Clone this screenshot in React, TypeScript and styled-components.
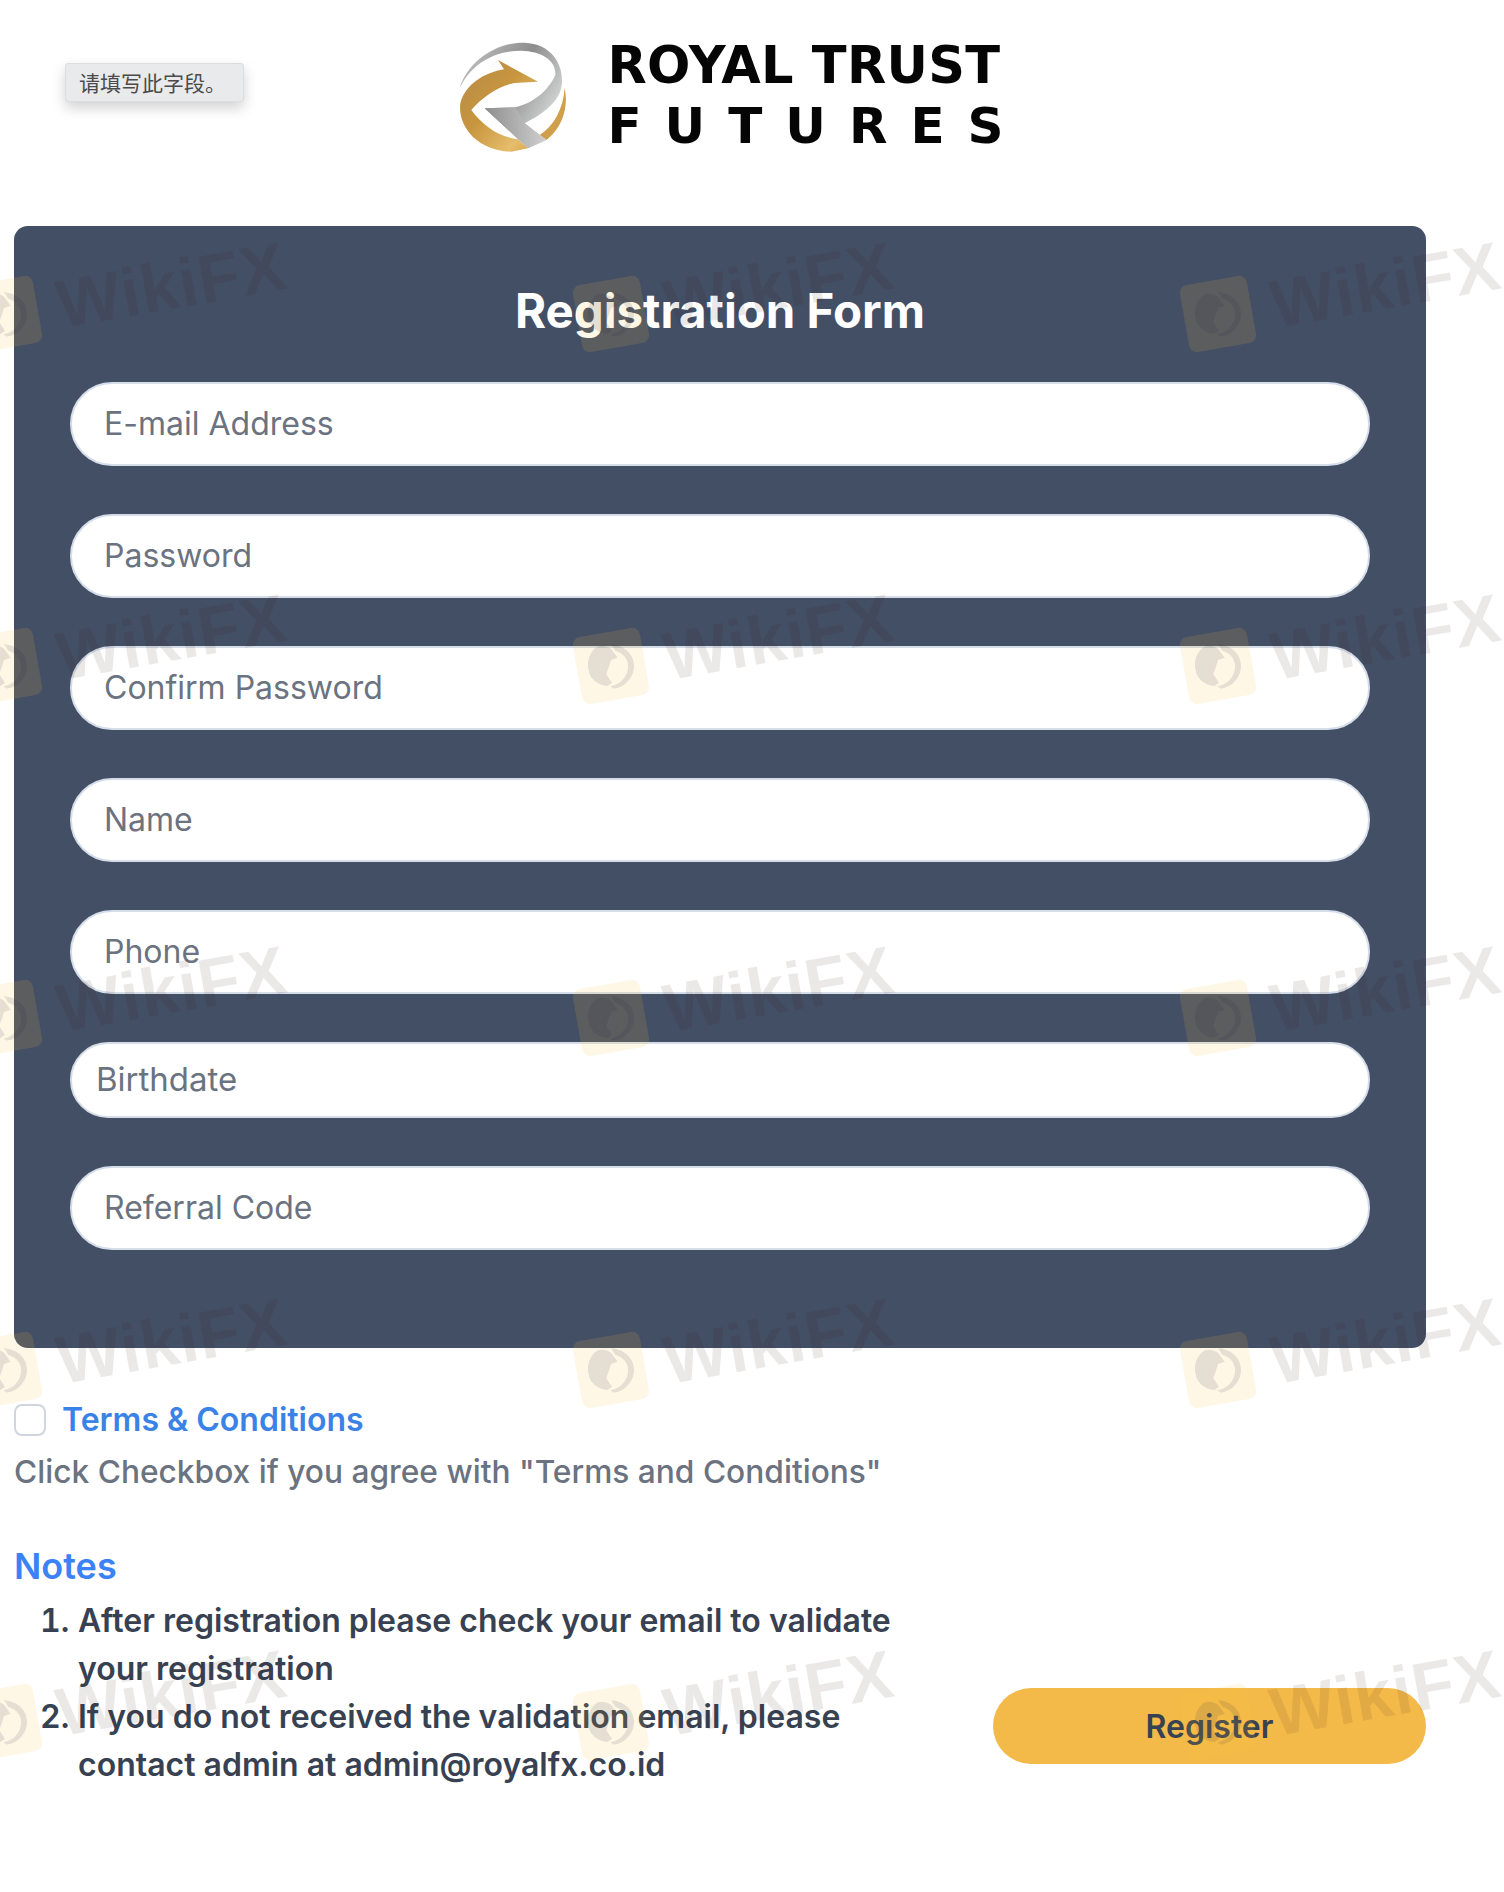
import * as React from 'react'
import styled, { createGlobalStyle } from 'styled-components'

const GlobalStyle = createGlobalStyle`
    html, body {
        margin: 0;
        padding: 0;
        background: #fff;
    }
    * {
        box-sizing: border-box;
    }
`

const FIELDS = [
    { placeholder: 'E-mail Address', type: 'email' },
    { placeholder: 'Password', type: 'password' },
    { placeholder: 'Confirm Password', type: 'password' },
    { placeholder: 'Name', type: 'text' },
    { placeholder: 'Phone', type: 'text' },
    { placeholder: 'Birthdate', type: 'text', compact: true },
    { placeholder: 'Referral Code', type: 'text' },
]

const WATERMARKS = Array.from({ length: 18 }, (_, i) => i)

const LogoMark = () => (
    <svg width="200" height="150" viewBox="0 0 600 450">
        <defs>
            <linearGradient id="goldBody" x1="0" y1="0" x2="1" y2="1">
                <stop offset="0" stopColor="#b5894a" />
                <stop offset="0.45" stopColor="#c8963f" />
                <stop offset="0.8" stopColor="#e6bd6c" />
                <stop offset="1" stopColor="#d19f45" />
            </linearGradient>
            <linearGradient id="greyBody" x1="0" y1="0" x2="1" y2="0.6">
                <stop offset="0" stopColor="#c9c9c9" />
                <stop offset="0.55" stopColor="#8d8d8d" />
                <stop offset="1" stopColor="#d9dada" />
            </linearGradient>
            <linearGradient id="greyLeg" x1="0" y1="0" x2="1" y2="0">
                <stop offset="0" stopColor="#8e8e8e" />
                <stop offset="1" stopColor="#cfcfcf" />
            </linearGradient>
        </defs>
        <path
            fill="url(#goldBody)"
            d="M330 185 L210 120 L228 148 C170 158 112 192 97 250 C88 320 150 394 250 395 L300 385 L270 358 C215 352 165 318 130 270 C165 228 225 190 270 188 Z"
        />
        <path
            fill="#cf9f4b"
            d="M410 205 C424 270 396 330 355 360 L335 345 C378 318 405 268 410 205 Z"
        />
        <path
            fill="url(#greyBody)"
            d="M95 205 C120 120 210 66 290 68 C370 72 405 130 402 190 C398 245 345 282 290 310 L355 360 L300 385 L170 265 L260 262 C320 250 365 205 382 165 C385 120 340 94 280 92 C200 92 130 130 95 205 Z"
        />
        <path fill="url(#greyLeg)" d="M170 265 L262 262 L290 310 L355 360 L300 385 Z" />
    </svg>
)

const EagleMark = () => (
    <svg width="46" height="46" viewBox="0 0 46 46">
        <path
            fill="rgba(40, 44, 70, 0.12)"
            d="M13 1.5 C17 0.5 22 2 26 6 L31 16 L24 17 L21 23 L17 30 L21 40 L16 42 C7 40 0 32 0 23 C0 13 5 5 13 1.5 Z"
        />
        <path
            fill="rgba(40, 44, 70, 0.12)"
            d="M27 1.5 C38 4 46 13 46 23 C46 36 35 46 22 46 L19 43 C31 43 40 34 40 23 C40 17 36 12 30 9 Z"
        />
    </svg>
)

const App = () => (
    <Page>
        <GlobalStyle />
        <Header>
            <LogoMark />
            <Wordmark>
                <BrandTop>ROYAL TRUST</BrandTop>
                <BrandBottom>FUTURES</BrandBottom>
            </Wordmark>
        </Header>
        <ValidationBubble>请填写此字段。</ValidationBubble>
        <FormCard>
            <FormTitle>Registration Form</FormTitle>
            {FIELDS.map(field => (
                <FieldInput
                    key={field.placeholder}
                    type={field.type}
                    placeholder={field.placeholder}
                    $compact={field.compact}
                />
            ))}
        </FormCard>
        <TermsRow>
            <TermsCheck type="checkbox" />
            <TermsLink href="#">Terms &amp; Conditions</TermsLink>
        </TermsRow>
        <TermsHint>Click Checkbox if you agree with "Terms and Conditions"</TermsHint>
        <Footer>
            <NotesColumn>
                <NotesTitle>Notes</NotesTitle>
                <NotesList>
                    <li>After registration please check your email to validate your registration</li>
                    <li>If you do not received the validation email, please contact admin at admin@royalfx.co.id</li>
                </NotesList>
            </NotesColumn>
            <RegisterButton type="button">Register</RegisterButton>
        </Footer>
        <WatermarkLayer>
            <WatermarkGrid>
                {WATERMARKS.map(i => (
                    <WatermarkItem key={i}>
                        <WatermarkBadge>
                            <EagleMark />
                        </WatermarkBadge>
                        {/* the top row sits above the page, only its badges peek in */}
                        {i > 2 && <WatermarkText>WikiFX</WatermarkText>}
                    </WatermarkItem>
                ))}
            </WatermarkGrid>
        </WatermarkLayer>
    </Page>
)

const Page = styled.div`
    position: relative;
    width: 1504px;
    height: 1892px;
    padding: 0 78px 0 14px;
    overflow: hidden;
    background: #fff;
    font-family: Inter, "Liberation Sans", "Noto Sans CJK SC", sans-serif;
`

const Header = styled.header`
    height: 226px;
    padding: 20px 0 0 15px;
    display: flex;
    justify-content: center;
    align-items: flex-start;
`

const Wordmark = styled.div`
    display: flex;
    flex-direction: column;
    margin: 16px 0 0 -21px;
    color: #050505;
    font-family: "DejaVu Sans", "Liberation Sans", sans-serif;
    font-weight: 700;
`

const BrandTop = styled.div`
    font-size: 51px;
    line-height: 60px;
    letter-spacing: 0.3px;
    white-space: nowrap;
`

const BrandBottom = styled.div`
    font-size: 50px;
    line-height: 60px;
    letter-spacing: 23px;
    white-space: nowrap;
`

const ValidationBubble = styled.div`
    position: absolute;
    left: 65px;
    top: 63px;
    width: 179px;
    height: 39px;
    padding: 0 0 2px 13px;
    display: flex;
    align-items: center;
    background: #e9eaec;
    border: 1px solid #dcdddf;
    border-radius: 3px;
    box-shadow: 0 6px 14px rgba(0, 0, 0, 0.18);
    color: #4b4b4b;
    font-size: 21px;
    font-family: "Noto Sans CJK SC", sans-serif;
    white-space: nowrap;
`

const FormCard = styled.form`
    height: 1122px;
    padding: 0 56px;
    display: flex;
    flex-direction: column;
    gap: 48px;
    background: #434f65;
    border-radius: 14px;
`

const FormTitle = styled.h1`
    height: 100px;
    margin: 56px 0 -48px;
    color: #fff;
    font-size: 47.4px;
    font-weight: 700;
    line-height: 58px;
    text-align: center;
`

const FieldInput = styled.input<{ $compact?: boolean }>`
    flex: none;
    width: 100%;
    height: ${p => (p.$compact ? '76px' : '84px')};
    padding: 0 ${p => (p.$compact ? '24px' : '32px')} 2px;
    background: #fff;
    border: 2px solid #d5dee8;
    border-radius: 42px;
    outline: none;
    color: #374151;
    font-family: inherit;
    font-size: ${p => (p.$compact ? '33px' : '32px')};

    &::placeholder {
        color: #6b7280;
        opacity: 1;
    }
`

const TermsRow = styled.div`
    margin-top: 52px;
    display: flex;
    align-items: center;
    gap: 16px;
`

const TermsCheck = styled.input`
    appearance: none;
    flex: none;
    width: 32px;
    height: 32px;
    margin: 0;
    background: #fff;
    border: 2px solid #cfd6e0;
    border-radius: 8px;
`

const TermsLink = styled.a`
    color: #3b82e6;
    font-size: 32px;
    font-weight: 600;
    line-height: 40px;
    text-decoration: none;
`

const TermsHint = styled.p`
    margin: 11px 0 0;
    color: #6b7280;
    font-size: 31.7px;
    font-weight: 500;
    line-height: 42px;
`

const Footer = styled.div`
    margin-top: 49px;
    display: flex;
    justify-content: space-between;
    align-items: flex-end;
`

const NotesColumn = styled.div`
    width: 900px;
`

const NotesTitle = styled.h2`
    margin: 0;
    color: #3b82f6;
    font-size: 36px;
    font-weight: 600;
    line-height: 48px;
`

const NotesList = styled.ol`
    margin: 7px 0 0;
    padding: 0 0 0 64px;
    color: #374151;
    font-size: 32px;
    font-weight: 600;
    line-height: 48px;
`

const RegisterButton = styled.button`
    width: 433px;
    height: 76px;
    margin-bottom: 25px;
    background: #f4ba49;
    border: none;
    border-radius: 38px;
    color: #374151;
    font-family: inherit;
    font-size: 32px;
    font-weight: 600;
`

const WatermarkLayer = styled.div`
    position: absolute;
    inset: 0;
    overflow: hidden;
    pointer-events: none;
`

const WatermarkGrid = styled.div`
    width: 1821px;
    margin: -214px 0 0 -30px;
    display: grid;
    grid-template-columns: repeat(3, 607px);
    grid-auto-rows: 352px;
`

const WatermarkItem = styled.div`
    display: flex;
    align-items: center;
    gap: 20px;
    transform: rotate(-10deg);
    transform-origin: 34px 50%;
`

const WatermarkBadge = styled.div`
    flex: none;
    width: 68px;
    height: 68px;
    display: flex;
    align-items: center;
    justify-content: center;
    background: rgba(255, 190, 60, 0.13);
    border-radius: 8px;
`

const WatermarkText = styled.span`
    color: rgba(60, 30, 30, 0.1);
    font-family: "Liberation Sans", Arial, sans-serif;
    font-size: 68px;
    font-weight: 700;
    letter-spacing: 1px;
    line-height: 1;
`

export default App
